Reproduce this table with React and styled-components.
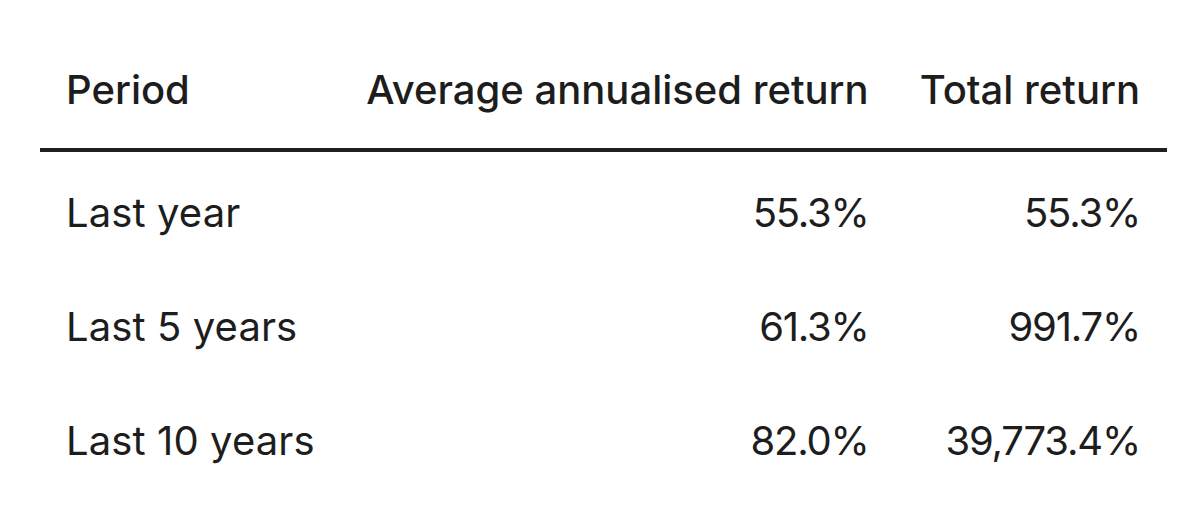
import React from "react";
import styled, { createGlobalStyle } from "styled-components";

const Global = createGlobalStyle`
  html, body { margin: 0; padding: 0; background: #fff; }
  body { font-family: Inter, "Liberation Sans", sans-serif; color: #1d1d1d; }
`;

const Page = styled.div`
  padding: 30px 33px 0 40px;
`;

const Table = styled.div`
  display: grid;
  grid-template-columns: minmax(0, 1fr) auto auto;
`;

const pad = (p) =>
  p.$first ? "0 28px 0 26px" : p.$last ? "0 27px 0 23px" : "0 28px";

const HeadCell = styled.div`
  height: 118px;
  display: flex;
  align-items: center;
  justify-content: ${(p) => (p.$first ? "flex-start" : "flex-end")};
  padding: ${pad};
  font-size: 40px;
  font-weight: 500;
  white-space: nowrap;
  border-bottom: 4px solid #1f1f1f;
`;

const Cell = styled.div`
  height: 114px;
  display: flex;
  align-items: center;
  justify-content: ${(p) => (p.$first ? "flex-start" : "flex-end")};
  padding: ${pad};
  margin-top: ${(p) => (p.$top ? "3px" : "0")};
  font-size: 40px;
  font-weight: 400;
  white-space: nowrap;
  letter-spacing: ${(p) => (p.$first ? "0.1px" : "-1.2px")};
`;

const rows = [
  ["Last year", "55.3%", "55.3%"],
  ["Last 5 years", "61.3%", "991.7%"],
  ["Last 10 years", "82.0%", "39,773.4%"],
];

export default function App() {
  return (
    <Page>
      <Global />
      <Table>
        <HeadCell $first>Period</HeadCell>
        <HeadCell>Average annualised return</HeadCell>
        <HeadCell $last>Total return</HeadCell>
        {rows.map((r, i) => (
          <React.Fragment key={r[0]}>
            <Cell $first $top={i === 0}>{r[0]}</Cell>
            <Cell $top={i === 0}>{r[1]}</Cell>
            <Cell $last $top={i === 0}>{r[2]}</Cell>
          </React.Fragment>
        ))}
      </Table>
    </Page>
  );
}
